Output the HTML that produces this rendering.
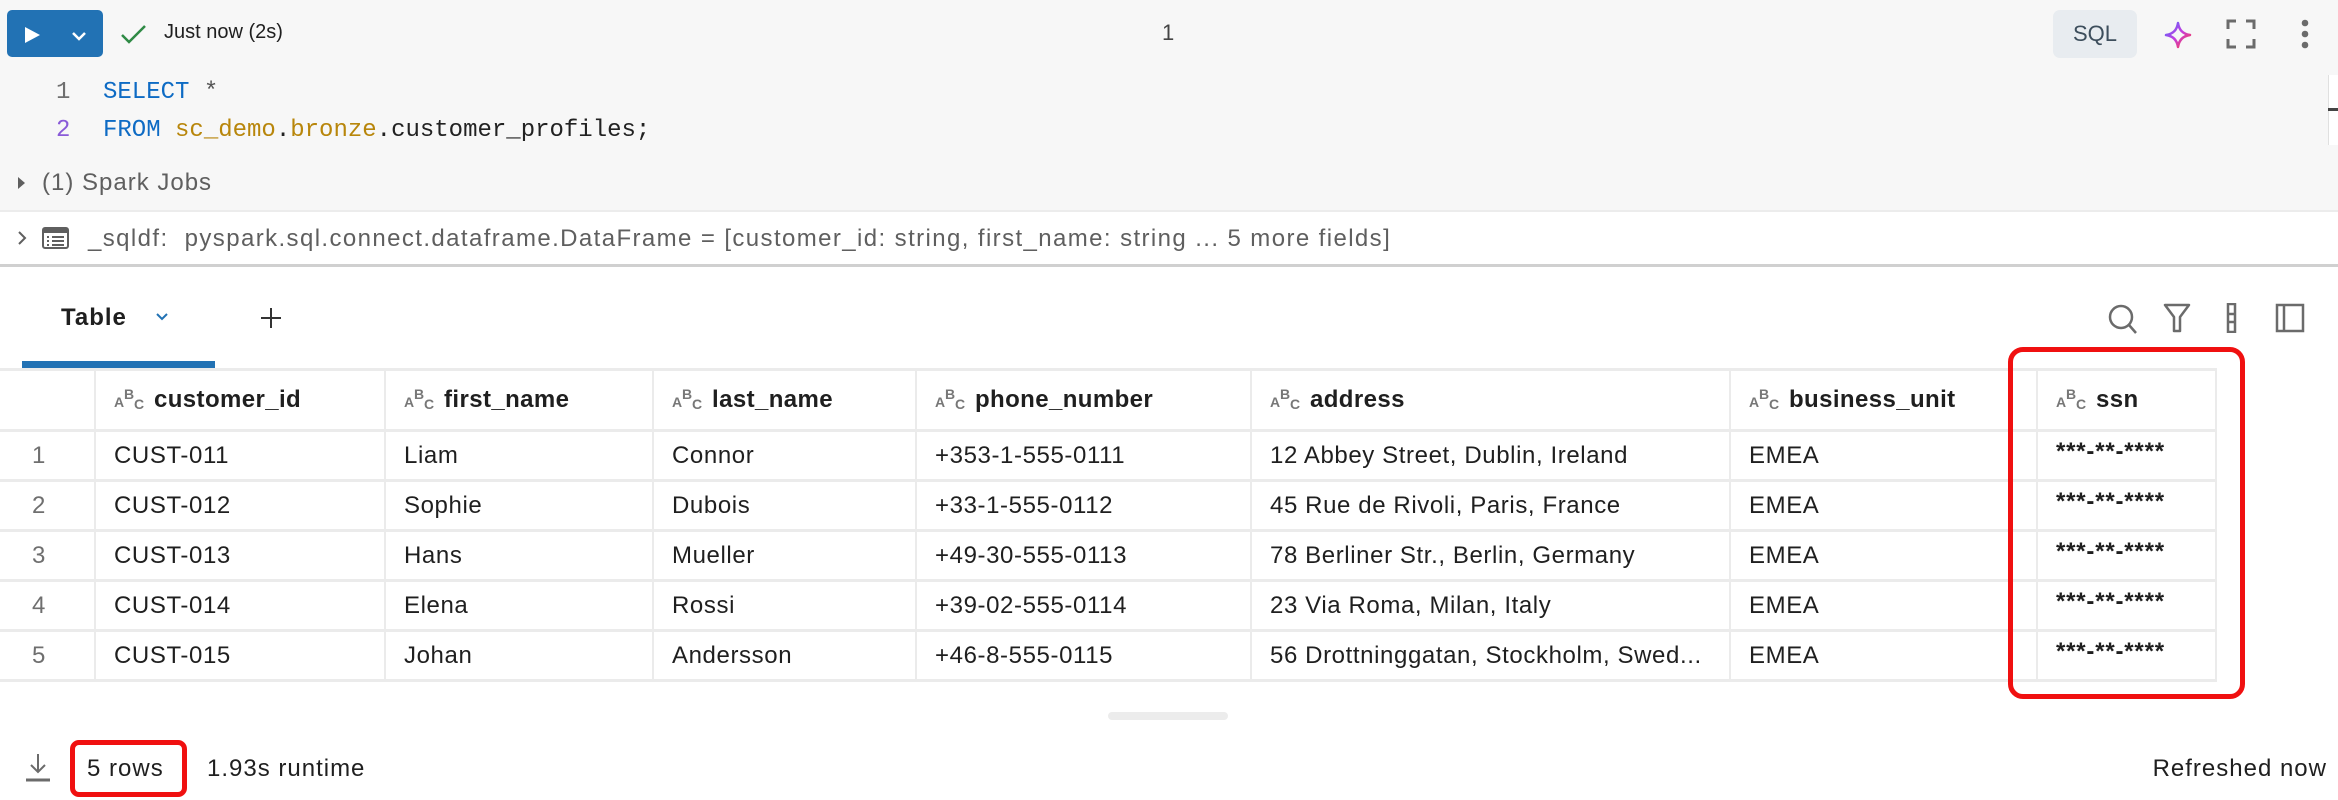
<!DOCTYPE html>
<html><head><meta charset="utf-8"><style>
*{margin:0;padding:0;box-sizing:border-box}
body{width:2338px;height:800px;background:#fff;font-family:"Liberation Sans",Helvetica,Arial,sans-serif;position:relative;overflow:hidden;color:#1f1f1f}
.a{position:absolute;white-space:nowrap}
.mono{font-family:"Liberation Mono",monospace}
table{position:absolute;left:0;top:368px;border-collapse:collapse;font-size:24px;letter-spacing:0.6px;table-layout:fixed}
td{height:50px;border-right:2px solid #ebebeb;border-bottom:3px solid #ebebeb;padding-left:18px;white-space:nowrap;overflow:hidden}
tr.h td{height:61px;font-weight:bold;border-top:3px solid #ebebeb;letter-spacing:0.4px}
td.n{color:#6f6f6f;padding-left:32px}
.ic{display:inline-block;position:relative;width:32px;height:24px;vertical-align:-3px;margin-right:8px;font-weight:bold;color:#777;font-size:14px;letter-spacing:0}
.ic i{position:absolute;font-style:normal}
.ssn{font-size:24px;font-weight:bold;letter-spacing:0.8px;padding-bottom:8px}
</style></head><body>
<div class="a" style="left:0;top:0;width:2338px;height:210px;background:#f7f7f7"></div>
<div class="a" style="left:0;top:210px;width:2338px;height:2px;background:#ececec"></div>
<div class="a" style="left:0;top:264px;width:2338px;height:3px;background:#d0d0d0"></div>
<div class="a" style="left:7px;top:10px;width:96px;height:47px;background:#2272b4;border-radius:5px"></div>
<svg class="a" style="left:24px;top:26px" width="18" height="18"><path d="M1 1 L16 9 L1 17Z" fill="#fff"/></svg>
<svg class="a" style="left:71px;top:30px" width="16" height="12"><path d="M2 3 L8 9 L14 3" stroke="#fff" stroke-width="2.5" fill="none"/></svg>
<svg class="a" style="left:120px;top:23px" width="28" height="22"><path d="M2 12 L9 19 L25 3" stroke="#2f8a45" stroke-width="2.5" fill="none"/></svg>
<div class="a" style="left:164px;top:21px;font-size:20px">Just now (2s)</div>
<div class="a" style="left:1162px;top:20px;font-size:22px;color:#444">1</div>
<div class="a" style="left:2053px;top:10px;width:84px;height:48px;background:#e8ecf0;border-radius:7px;font-size:22px;color:#3d4e5c;text-align:center;line-height:48px">SQL</div>
<svg class="a" style="left:2163px;top:20px" width="30" height="30" viewBox="0 0 30 30"><defs><linearGradient id="g" x1="0" y1="0" x2="1" y2="1"><stop offset="0" stop-color="#4d6bff"/><stop offset=".5" stop-color="#c43ee0"/><stop offset="1" stop-color="#ff3d3d"/></linearGradient></defs><path d="M15 3 Q16.5 13.5 27 15 Q16.5 16.5 15 27 Q13.5 16.5 3 15 Q13.5 13.5 15 3Z" fill="none" stroke="url(#g)" stroke-width="2.5" stroke-linejoin="round"/></svg>
<svg class="a" style="left:2226px;top:19px" width="30" height="30"><path d="M2 10V2H10M20 2H28V10M28 20V28H20M10 28H2V20" stroke="#6b6b6b" stroke-width="3" fill="none"/></svg>
<svg class="a" style="left:2298px;top:18px" width="14" height="32"><circle cx="7" cy="5" r="3.3" fill="#6b6b6b"/><circle cx="7" cy="16" r="3.3" fill="#6b6b6b"/><circle cx="7" cy="27" r="3.3" fill="#6b6b6b"/></svg>
<div class="a" style="left:2328px;top:75px;width:10px;height:70px;background:#fff;border-left:1px solid #e0e0e0"></div>
<div class="a" style="left:2328px;top:108px;width:10px;height:3px;background:#444"></div>
<div class="a mono" style="left:56px;top:79px;font-size:24px;color:#6f6f6f">1</div>
<div class="a mono" style="left:56px;top:117px;font-size:24px;color:#8a5bd8">2</div>
<div class="a mono" style="left:103px;top:79px;font-size:24px"><span style="color:#0e6bc4">SELECT</span> <span style="color:#555">*</span></div>
<div class="a mono" style="left:103px;top:117px;font-size:24px;color:#222"><span style="color:#0e6bc4">FROM</span> <span style="color:#b8860b">sc_demo</span>.<span style="color:#b8860b">bronze</span>.customer_profiles;</div>
<svg class="a" style="left:17px;top:176px" width="10" height="14"><path d="M1 1L8 7L1 13Z" fill="#5f5f5f"/></svg>
<div class="a" style="left:42px;top:169px;font-size:24px;letter-spacing:1px;color:#5f5f5f">(1) Spark Jobs</div>
<svg class="a" style="left:17px;top:230px" width="10" height="16"><path d="M2 2L8 8L2 14" stroke="#5f5f5f" stroke-width="2" fill="none"/></svg>
<svg class="a" style="left:42px;top:227px" width="28" height="22"><rect x="1" y="1" width="25" height="20" rx="2" fill="none" stroke="#5f5f5f" stroke-width="2"/><rect x="1" y="1" width="25" height="5" fill="#5f5f5f"/><path d="M5 10h2M10 10h12M5 14h2M10 14h12M5 18h2M10 18h12" stroke="#5f5f5f" stroke-width="2"/></svg>
<div class="a" style="left:88px;top:225px;font-size:24px;letter-spacing:1.4px;color:#5f5f5f">_sqldf:&nbsp; pyspark.sql.connect.dataframe.DataFrame = [customer_id: string, first_name: string ... 5 more fields]</div>
<div class="a" style="left:61px;top:304px;font-size:24px;letter-spacing:1px;font-weight:bold">Table</div>
<svg class="a" style="left:155px;top:312px" width="14" height="10"><path d="M2 2L7 7L12 2" stroke="#2272b4" stroke-width="2" fill="none"/></svg>
<div class="a" style="left:22px;top:361px;width:193px;height:7px;background:#2272b4"></div>
<svg class="a" style="left:260px;top:307px" width="22" height="22"><path d="M11 1V21M1 11H21" stroke="#333" stroke-width="2"/></svg>
<svg class="a" style="left:2107px;top:303px" width="32" height="32"><circle cx="14" cy="14" r="11" stroke="#6b6b6b" stroke-width="2.5" fill="none"/><path d="M22 22L29 30" stroke="#6b6b6b" stroke-width="2.5"/></svg>
<svg class="a" style="left:2163px;top:303px" width="28" height="30"><path d="M2 2H26L17 14V28H11V14Z" stroke="#6b6b6b" stroke-width="2.5" fill="none" stroke-linejoin="round"/></svg>
<svg class="a" style="left:2226px;top:303px" width="12" height="30"><rect x="2" y="1" width="7" height="28" stroke="#6b6b6b" stroke-width="2.5" fill="none"/><path d="M2 11H9M2 19H9" stroke="#6b6b6b" stroke-width="2.5"/></svg>
<svg class="a" style="left:2275px;top:303px" width="30" height="30"><rect x="2" y="2" width="26" height="26" stroke="#6b6b6b" stroke-width="2.5" fill="none"/><path d="M9 2V28" stroke="#6b6b6b" stroke-width="2.5"/></svg>
<table>
<colgroup><col style="width:95px"><col style="width:290px"><col style="width:268px"><col style="width:263px"><col style="width:335px"><col style="width:479px"><col style="width:307px"><col style="width:179px"></colgroup>
<tr class="h"><td></td>
<td><span class="ic"><i style="left:0;top:8px">A</i><i style="left:10px;top:0">B</i><i style="left:20px;top:10px">C</i></span>customer_id</td>
<td><span class="ic"><i style="left:0;top:8px">A</i><i style="left:10px;top:0">B</i><i style="left:20px;top:10px">C</i></span>first_name</td>
<td><span class="ic"><i style="left:0;top:8px">A</i><i style="left:10px;top:0">B</i><i style="left:20px;top:10px">C</i></span>last_name</td>
<td><span class="ic"><i style="left:0;top:8px">A</i><i style="left:10px;top:0">B</i><i style="left:20px;top:10px">C</i></span>phone_number</td>
<td><span class="ic"><i style="left:0;top:8px">A</i><i style="left:10px;top:0">B</i><i style="left:20px;top:10px">C</i></span>address</td>
<td><span class="ic"><i style="left:0;top:8px">A</i><i style="left:10px;top:0">B</i><i style="left:20px;top:10px">C</i></span>business_unit</td>
<td><span class="ic"><i style="left:0;top:8px">A</i><i style="left:10px;top:0">B</i><i style="left:20px;top:10px">C</i></span>ssn</td></tr>
<tr><td class="n">1</td><td>CUST-011</td><td>Liam</td><td>Connor</td><td>+353-1-555-0111</td><td>12 Abbey Street, Dublin, Ireland</td><td>EMEA</td><td class="ssn">***-**-****</td></tr>
<tr><td class="n">2</td><td>CUST-012</td><td>Sophie</td><td>Dubois</td><td>+33-1-555-0112</td><td>45 Rue de Rivoli, Paris, France</td><td>EMEA</td><td class="ssn">***-**-****</td></tr>
<tr><td class="n">3</td><td>CUST-013</td><td>Hans</td><td>Mueller</td><td>+49-30-555-0113</td><td>78 Berliner Str., Berlin, Germany</td><td>EMEA</td><td class="ssn">***-**-****</td></tr>
<tr><td class="n">4</td><td>CUST-014</td><td>Elena</td><td>Rossi</td><td>+39-02-555-0114</td><td>23 Via Roma, Milan, Italy</td><td>EMEA</td><td class="ssn">***-**-****</td></tr>
<tr><td class="n">5</td><td>CUST-015</td><td>Johan</td><td>Andersson</td><td>+46-8-555-0115</td><td>56 Drottninggatan, Stockholm, Swed...</td><td>EMEA</td><td class="ssn">***-**-****</td></tr>
</table>
<div class="a" style="left:2008px;top:347px;width:237px;height:352px;border:5px solid #f01010;border-radius:15px"></div>
<div class="a" style="left:1108px;top:712px;width:120px;height:8px;background:#ececec;border-radius:4px"></div>
<svg class="a" style="left:24px;top:752px" width="28" height="30"><path d="M14 2V20M7 13L14 20L21 13" stroke="#6b6b6b" stroke-width="2" fill="none"/><path d="M2 28H26" stroke="#6b6b6b" stroke-width="3"/></svg>
<div class="a" style="left:70px;top:740px;width:117px;height:57px;border:5px solid #f01010;border-radius:9px"></div>
<div class="a" style="left:87px;top:755px;font-size:24px;letter-spacing:1px">5 rows</div>
<div class="a" style="left:207px;top:755px;font-size:24px;letter-spacing:1px">1.93s runtime</div>
<div class="a" style="right:11px;top:755px;font-size:24px;letter-spacing:1px">Refreshed now</div>
</body></html>
